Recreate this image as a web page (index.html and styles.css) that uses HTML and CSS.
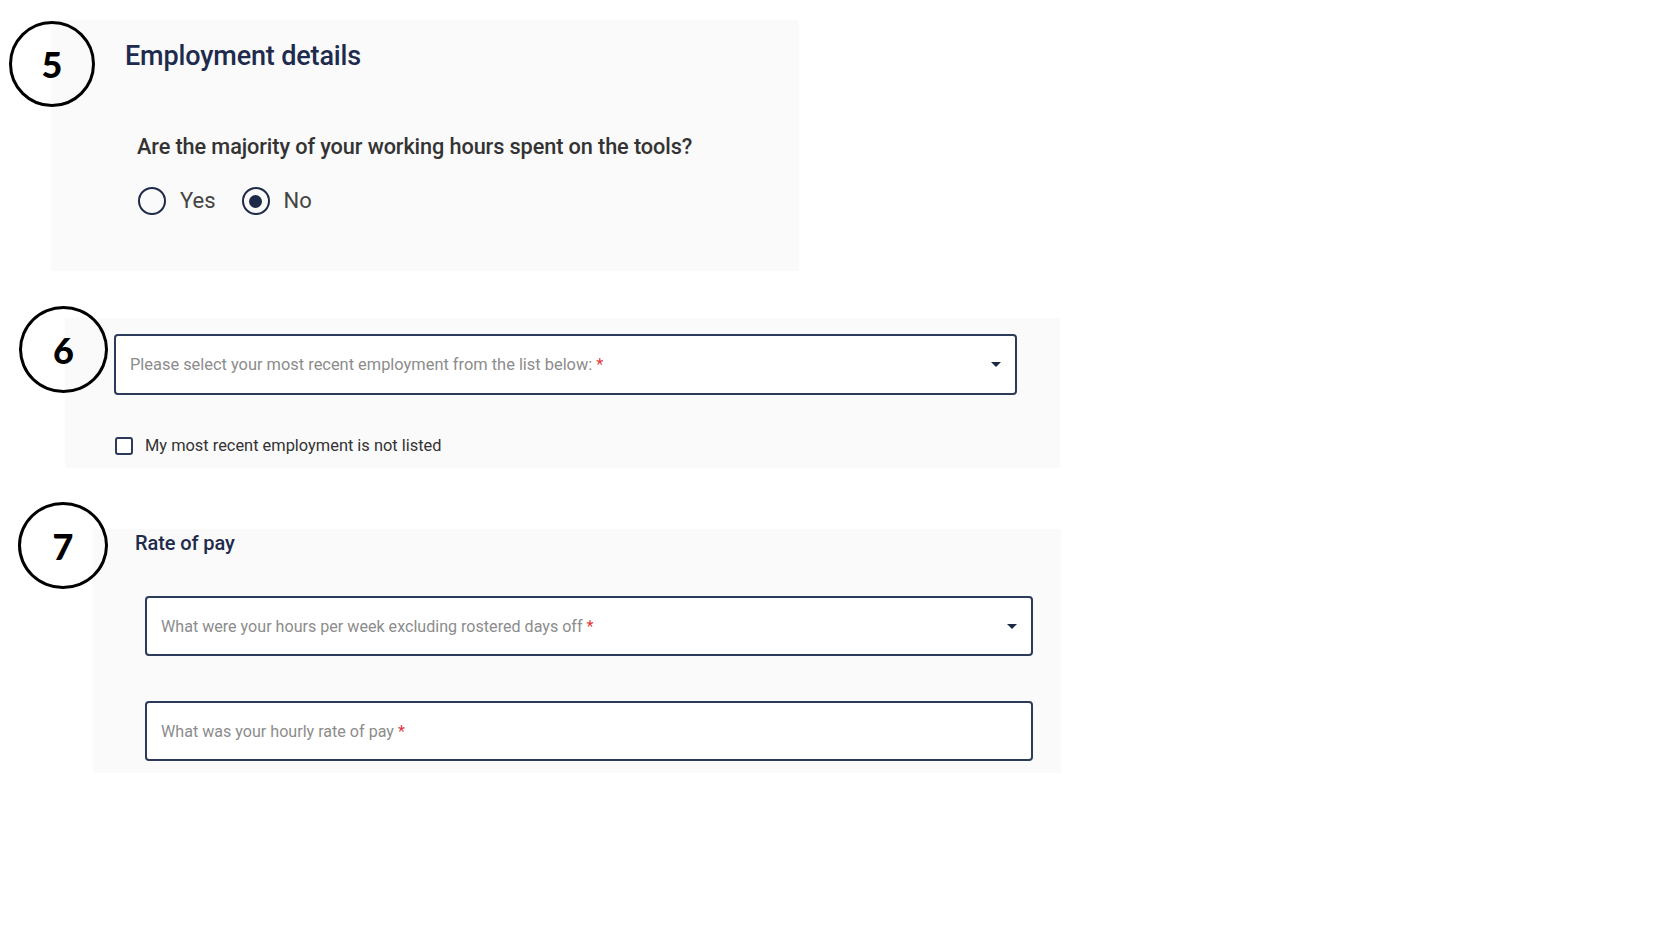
FILE: index.html
```html
<!DOCTYPE html>
<html lang="en">
<head>
<meta charset="utf-8">
<title>Employment details</title>
<link rel="stylesheet" href="styles.css">
</head>
<body>
<div class="page">
  <section class="panel panel-employment">
    <h2 class="heading">Employment details</h2>
    <p class="question">Are the majority of your working hours spent on the tools?</p>
    <div class="radios">
      <label class="radio"><span class="radio-dot"></span><span class="radio-label">Yes</span></label>
      <label class="radio checked"><span class="radio-dot"></span><span class="radio-label">No</span></label>
    </div>
  </section>

  <section class="panel panel-recent">
    <div class="field select-field">
      <span class="placeholder">Please select your most recent employment from the list below:<span class="req tight">*</span></span>
      <span class="caret"></span>
    </div>
    <label class="check">
      <span class="check-box"></span>
      <span class="check-label">My most recent employment is not listed</span>
    </label>
  </section>

  <section class="panel panel-pay">
    <h3 class="subheading">Rate of pay</h3>
    <div class="pay-fields">
      <div class="field select-field">
        <span class="placeholder">What were your hours per week excluding rostered days off <span class="req">*</span></span>
        <span class="caret"></span>
      </div>
      <div class="field">
        <span class="placeholder">What was your hourly rate of pay <span class="req">*</span></span>
      </div>
    </div>
  </section>

  <div class="step step-5">5</div>
  <div class="step step-6">6</div>
  <div class="step step-7">7</div>
</div>
</body>
</html>
```

FILE: styles.css
```css
* { box-sizing: border-box; }

html, body {
  margin: 0;
  padding: 0;
  background: #ffffff;
}

body {
  font-family: Roboto, "Noto Sans", Arial, sans-serif;
  color: #333;
}

.page {
  position: relative;
  width: 1678px;
  height: 938px;
  padding-top: 20px;
}

.panel {
  background: #fafafa;
}

/* Section 5 */
.panel-employment {
  margin-left: 51px;
  width: 748px;
  height: 251px;
  padding: 20px 0 0 74px;
}

.heading {
  margin: 0;
  font-size: 27px;
  line-height: 32px;
  font-weight: 500;
  color: #1e2b4d;
  letter-spacing: -0.15px;
}

.question {
  margin: 61px 0 0 12px;
  font-size: 21.7px;
  line-height: 28px;
  font-weight: 500;
  color: #333;
  letter-spacing: -0.1px;
}

.radios {
  display: flex;
  gap: 26px;
  margin: 26px 0 0 13px;
}

.radio {
  display: flex;
  align-items: center;
  gap: 14px;
}

.radio-dot {
  width: 28px;
  height: 28px;
  border: 2.5px solid #1c2947;
  border-radius: 50%;
  display: flex;
  align-items: center;
  justify-content: center;
}

.radio.checked .radio-dot::after {
  content: "";
  width: 13px;
  height: 13px;
  border-radius: 50%;
  background: #1c2947;
}

.radio-label {
  font-size: 22px;
  line-height: 28px;
  color: #444;
}

/* Section 6 */
.panel-recent {
  margin: 47px 0 0 65px;
  width: 995px;
  height: 150px;
  padding: 16px 0 0 49px;
}

.field {
  position: relative;
  display: flex;
  align-items: center;
  width: 903px;
  height: 61px;
  padding: 0 14px;
  background: #fff;
  border: 2px solid #2c3b5a;
  border-radius: 4px;
}

.placeholder {
  font-size: 16.4px;
  color: #8c8c8c;
}

.req {
  color: #e0393e;
}

.req.tight {
  margin-left: 4px;
}

.select-field .caret {
  margin-left: auto;
  width: 0;
  height: 0;
  border-left: 5px solid transparent;
  border-right: 5px solid transparent;
  border-top: 5px solid #1c2947;
}

.check {
  display: flex;
  align-items: center;
  gap: 12px;
  margin: 41px 0 0 1px;
}

.check-box {
  width: 18px;
  height: 18px;
  border: 2px solid #2c3b5a;
  border-radius: 3px;
  background: #fff;
}

.check-label {
  font-size: 16.4px;
  color: #333;
}

/* Section 7 */
.panel-pay {
  margin: 61px 0 0 93px;
  width: 968px;
  height: 244px;
  padding: 0 0 0 42px;
}

.subheading {
  margin: 0;
  font-size: 20px;
  line-height: 28px;
  font-weight: 500;
  color: #1e2b4d;
  letter-spacing: -0.1px;
}

.pay-fields {
  display: flex;
  flex-direction: column;
  gap: 45px;
  margin: 39px 0 0 10px;
}

.pay-fields .field {
  width: 888px;
  height: 60px;
}

.pay-fields .placeholder {
  font-size: 16.1px;
}

/* Step annotations overlaid on the form */
.step {
  position: absolute;
  width: 86px;
  height: 86px;
  border: 3px solid #000;
  border-radius: 50%;
  display: flex;
  align-items: center;
  justify-content: center;
  font-family: Lato, "Open Sans", sans-serif;
  font-weight: 900;
  font-size: 36px;
  color: #000;
}

.step-5 { left: 9px;  top: 21px; }
.step-6 { left: 19px; top: 306px; width: 89px; height: 87px; }
.step-7 { left: 18px; top: 502px; width: 90px; height: 87px; }
```
